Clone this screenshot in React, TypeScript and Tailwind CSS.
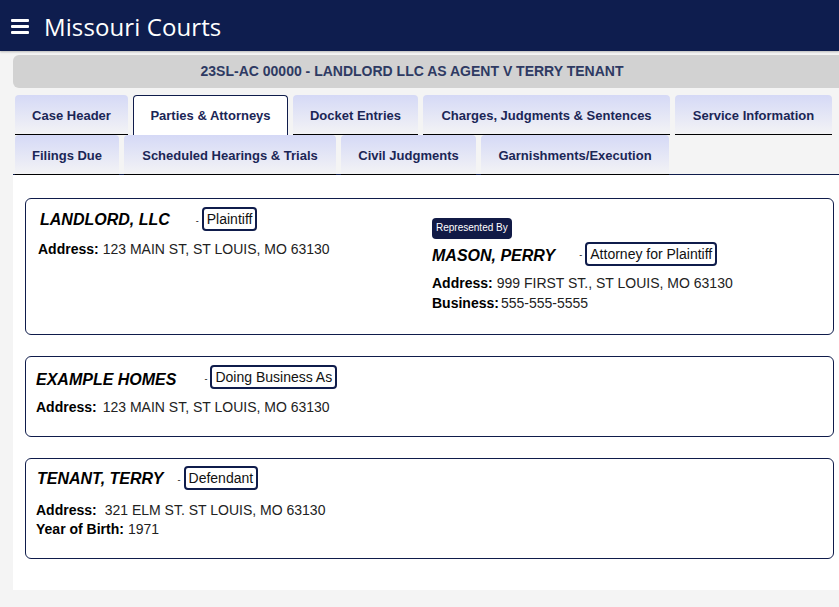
import React from 'react';

const tabRows = [
  [
    { label: 'Case Header', w: 'w-[113px]' },
    { label: 'Parties & Attorneys', w: 'w-[155px]', active: true },
    { label: 'Docket Entries', w: 'w-[125px]' },
    { label: 'Charges, Judgments & Sentences', w: 'w-[247px]' },
    { label: 'Service Information', w: 'w-[157px]' },
  ],
  [
    { label: 'Filings Due', w: 'w-[104px]' },
    { label: 'Scheduled Hearings & Trials', w: 'w-[212px]' },
    { label: 'Civil Judgments', w: 'w-[135px]' },
    { label: 'Garnishments/Execution', w: 'w-[188px]' },
  ],
];

function Badge({ children }: { children: React.ReactNode }) {
  return (
    <span className="inline-flex h-[24px] items-center rounded-[4px] border-2 border-[#0f1c4b] px-[3px] text-[14px] leading-none text-[#111]">
      {children}
    </span>
  );
}

function NameRow({ name, dash, role, drop = 'mt-[2px]' }: { name: string; dash: string; role: string; drop?: string }) {
  return (
    <div className="flex items-center">
      <span className={`${drop} text-[16px] font-bold italic leading-none text-black`}>{name}</span>
      <span className={`${dash} mr-[3px] mt-[4px] text-[9px] leading-none text-black`}>-</span>
      <Badge>{role}</Badge>
    </div>
  );
}

function Field({ label, value, gap = 'ml-[4px]' }: { label: string; value: string; gap?: string }) {
  return (
    <div className="flex text-[14px] leading-[20px]">
      <span className="font-bold text-black">{label}</span>
      <span className={`${gap} text-[#222]`}>{value}</span>
    </div>
  );
}

export default function App() {
  return (
    <div className="min-h-screen bg-[#f4f4f4] font-['Liberation_Sans',Arial,sans-serif]">
      <header className="flex h-[51px] items-center bg-[#0e1d4e] shadow-[0_1px_2px_rgba(0,0,0,0.25)]">
        <svg className="ml-[11px] mt-[2px]" width="18" height="15" viewBox="0 0 18 15">
          <rect x="0" y="0" width="18" height="3" rx="1" fill="#fff" />
          <rect x="0" y="6" width="18" height="3" rx="1" fill="#fff" />
          <rect x="0" y="12" width="18" height="3" rx="1" fill="#fff" />
        </svg>
        <span className="ml-[15px] mt-[2px] font-['Open_Sans',sans-serif] text-[24px] tracking-[0.1px] leading-none text-white">
          Missouri Courts
        </span>
      </header>

      <main className="pl-[13px] pt-[4px]">
        <div className="flex h-[33px] items-center justify-center rounded-l-[6px] bg-[#d2d2d2] pr-[28px] text-[14px] font-bold text-[#2e3a63]">
          23SL-AC 00000 - LANDLORD LLC AS AGENT V TERRY TENANT
        </div>

        <div className="mt-[7px]">
          <div className="flex gap-[5px] pl-[2px]">
            {tabRows[0].map((t) => (
              <div
                key={t.label}
                className={
                  t.active
                    ? `${t.w} flex h-[40px] items-center justify-center rounded-t-[4px] border border-b-0 border-[#0f1c4b] bg-white pt-[1px] text-[13px] font-bold text-[#1b2656]`
                    : `${t.w} flex h-[40px] items-center justify-center rounded-t-[4px] border-b border-black bg-gradient-to-b from-[#d5d9f6] to-[#f3f3f5] pt-[3px] text-[13px] font-bold text-[#1b2656]`
                }
              >
                {t.label}
              </div>
            ))}
          </div>
          <div className="flex h-[40px] gap-[5px] border-b border-[#0f1c4b] pl-[2px]">
            {tabRows[1].map((t) => (
              <div
                key={t.label}
                className={`${t.w} -mb-px flex h-[40px] items-center justify-center rounded-t-[4px] border-b border-black bg-gradient-to-b from-[#d5d9f6] to-[#f3f3f5] pt-[3px] text-[13px] font-bold text-[#1b2656]`}
              >
                {t.label}
              </div>
            ))}
          </div>
        </div>

        <div className="flex h-[415px] flex-col gap-[21px] bg-white pl-[12px] pr-[5px] pt-[23px]">
          <div className="flex h-[137px] rounded-[6px] border border-[#0f1c4b] pl-[12px] pt-[8px]">
            <div className="w-[394px]">
              <div className="pl-[2px]">
                <NameRow name="LANDLORD, LLC" dash="ml-[26px]" role="Plaintiff" />
              </div>
              <div className="mt-[8px]">
                <Field label="Address:" value="123 MAIN ST, ST LOUIS, MO 63130" />
              </div>
            </div>
            <div className="pt-[7px]">
              <span className="inline-flex h-[21px] items-center rounded-[4px] bg-[#111a46] px-[4px] text-[10px] leading-none text-white">
                Represented By
              </span>
              <div className="mt-[3px]">
                <NameRow name="MASON, PERRY" dash="ml-[24px]" role="Attorney for Plaintiff" drop="mt-[5px]" />
              </div>
              <div className="mt-[7px]">
                <Field label="Address:" value="999 FIRST ST., ST LOUIS, MO 63130" />
                <Field label="Business:" value="555-555-5555" gap="ml-[2px]" />
              </div>
            </div>
          </div>

          <div className="h-[81px] rounded-[6px] border border-[#0f1c4b] pl-[10px] pt-[8px]">
            <NameRow name="EXAMPLE HOMES" dash="ml-[28px]" role="Doing Business As" drop="mt-[6px]" />
            <div className="mt-[8px]">
              <Field label="Address:" value="123 MAIN ST, ST LOUIS, MO 63130" gap="ml-[6px]" />
            </div>
          </div>

          <div className="h-[101px] rounded-[6px] border border-[#0f1c4b] pl-[10px] pt-[7px]">
            <div className="pl-[1px]">
              <NameRow name="TENANT, TERRY" dash="ml-[14px]" role="Defendant" />
            </div>
            <div className="mt-[11px] [&>div]:leading-[19px]">
              <Field label="Address:" value="321 ELM ST. ST LOUIS, MO 63130" gap="ml-[8px]" />
              <Field label="Year of Birth:" value="1971" />
            </div>
          </div>
        </div>
      </main>
    </div>
  );
}
